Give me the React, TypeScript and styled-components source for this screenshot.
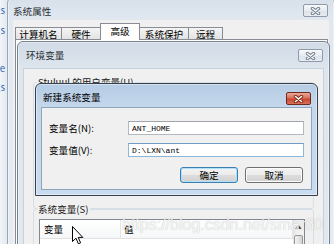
import React from "react";
import styled, { createGlobalStyle } from "styled-components";

const UI = `"Noto Sans CJK SC", "Noto Sans", sans-serif`;
const MONO = `"Liberation Mono", "DejaVu Sans Mono", monospace`;

const GlobalStyle = createGlobalStyle`
  html, body { margin: 0; padding: 0; }
  body { background: #e4ebf2; font-family: ${UI}; font-size: 9.6px; color: #000; }
  #root { width: 334px; height: 244px; }
`;

const Desktop = styled.div`
  position: relative;
  width: 334px;
  height: 244px;
  overflow: hidden;
  background: linear-gradient(90deg, #f1f5f9 0, #e2e9f0 7px);
`;

const BackLinks = styled.div`
  position: absolute;
  left: -31px;
  top: 0;
  width: 36px;
  display: flex;
  flex-direction: column;
  align-items: flex-end;
  color: #2c63b5;
`;

const BackLink = styled.span<{ $mt: number }>`
  margin-top: ${(p) => p.$mt}px;
  line-height: 12px;
  white-space: nowrap;
`;

const Win = styled.div<{
  $x: number;
  $y: number;
  $w: number;
  $h: number;
  $frame: string;
  $edge: string;
  $z: number;
}>`
  position: absolute;
  left: ${(p) => p.$x}px;
  top: ${(p) => p.$y}px;
  width: ${(p) => p.$w}px;
  height: ${(p) => p.$h}px;
  z-index: ${(p) => p.$z};
  box-sizing: border-box;
  display: flex;
  flex-direction: column;
  padding: 0 5px 5px;
  border: 1px solid ${(p) => p.$edge};
  border-radius: 6px 6px 0 0;
  background: ${(p) => p.$frame};
  box-shadow: inset 0 0 0 1px rgba(255, 255, 255, 0.45);
`;

const TitleBar = styled.div<{ $h: number; $pl: number }>`
  flex: none;
  height: ${(p) => p.$h}px;
  box-sizing: border-box;
  padding: 7px 0 0 ${(p) => p.$pl}px;
  display: flex;
  align-items: flex-start;
  justify-content: space-between;
`;

const Title = styled.span<{ $active?: boolean }>`
  line-height: 12px;
  color: ${(p) => (p.$active ? "#000" : "#2b3035")};
  white-space: nowrap;
`;

const CloseBtn = styled.div<{ $active?: boolean; $dy: number }>`
  flex: none;
  width: 25px;
  height: 13px;
  box-sizing: border-box;
  margin: ${(p) => p.$dy}px 1px 0 0;
  border: 1px solid ${(p) => (p.$active ? "#6e2a1f" : "#8f9baa")};
  border-radius: 2px;
  background: ${(p) =>
    p.$active
      ? "linear-gradient(#eaa898 0, #d9725d 45%, #c9462f 55%, #d8735a 100%)"
      : "linear-gradient(#f7f9fb 0, #e7ecf1 50%, #dbe2e9 51%, #e6ebf0 100%)"};
  display: flex;
  align-items: center;
  justify-content: center;
`;

const Client = styled.div<{ $edge: string }>`
  flex: 1;
  min-height: 0;
  display: flex;
  flex-direction: column;
  background: #f0f0f0;
  border: 1px solid ${(p) => p.$edge};
  overflow: hidden;
`;

/* ---------- tabs ---------- */
const TabStrip = styled.div`
  flex: none;
  height: 18px;
  padding-left: 1px;
  display: flex;
  align-items: flex-end;
  position: relative;
  z-index: 1;
`;

const Tab = styled.div<{ $w: number; $active?: boolean; $first?: boolean }>`
  box-sizing: border-box;
  width: ${(p) => p.$w}px;
  height: ${(p) => (p.$active ? 17 : 12)}px;
  margin-bottom: ${(p) => (p.$active ? -1 : 0)}px;
  margin-left: ${(p) => (p.$first ? 0 : -1)}px;
  border: 1px solid #898c95;
  border-bottom: none;
  background: ${(p) => (p.$active ? "#fff" : "linear-gradient(#f4f4f4, #e3e3e3)")};
  display: flex;
  align-items: center;
  justify-content: center;
  padding-bottom: ${(p) => (p.$active ? 2 : 0)}px;
  line-height: 12px;
  white-space: nowrap;
  position: relative;
  z-index: ${(p) => (p.$active ? 2 : 1)};
`;

const TabPanel = styled.div`
  flex: 1;
  margin-left: 1px;
  background: #fff;
  border: 1px solid #898c95;
`;

/* ---------- env window content ---------- */
const EnvBody = styled.div`
  flex: 1;
  display: flex;
  flex-direction: column;
  padding: 13px 9px 0;
`;

const GroupBox = styled.div<{ $h: number }>`
  flex: none;
  height: ${(p) => p.$h}px;
  box-sizing: border-box;
  border: 1px solid #d5dfe5;
  border-radius: 3px;
  display: flex;
  flex-direction: column;
`;

const GroupLabel = styled.span`
  align-self: flex-start;
  margin: -7px 0 0 3px;
  padding: 0 1px;
  line-height: 12px;
  background: #f0f0f0;
  color: #1a1a1a;
  white-space: nowrap;
`;

const ListView = styled.div`
  flex: 1;
  margin: 4px 0 0 5px;
  width: 266px;
  box-sizing: border-box;
  border: 1px solid #828790;
  background: #fff;
  display: flex;
`;

const ListBody = styled.div`
  flex: 1;
  display: flex;
  flex-direction: column;
`;

const ListHeader = styled.div`
  flex: none;
  height: 18px;
  display: flex;
  border-bottom: 1px solid #e2e2e2;
  background: linear-gradient(#ffffff, #f6f7f8);
`;

const HeadCell = styled.div<{ $w?: number; $pl: number }>`
  ${(p) => (p.$w ? `width: ${p.$w}px; flex: none;` : "flex: 1;")}
  box-sizing: border-box;
  padding-left: ${(p) => p.$pl}px;
  display: flex;
  align-items: center;
  border-right: 1px solid #e5e5e5;
  line-height: 12px;
`;

const DataRow = styled.div`
  display: flex;
  height: 16px;
  align-items: center;
  font-family: ${MONO};
  font-size: 8px;
`;

const DataCell = styled.div<{ $w?: number; $pl: number }>`
  ${(p) => (p.$w ? `width: ${p.$w}px; flex: none;` : "flex: 1;")}
  padding-left: ${(p) => p.$pl}px;
  white-space: nowrap;
  overflow: hidden;
`;

const ScrollBar = styled.div`
  flex: none;
  width: 11px;
  display: flex;
  flex-direction: column;
  background: linear-gradient(90deg, #e3e3e3, #f1f1f1 35%, #f1f1f1);
`;

const ScrollArrow = styled.div`
  flex: none;
  height: 14px;
  display: flex;
  align-items: center;
  justify-content: center;
`;

const ScrollThumb = styled.div`
  flex: none;
  height: 30px;
  margin: 1px 1px 0;
  box-sizing: border-box;
  border: 1px solid #979797;
  border-radius: 2px;
  background: linear-gradient(90deg, #f4f4f4, #e2e2e2 50%, #d3d3d3);
`;

/* ---------- new-variable dialog ---------- */
const Form = styled.div`
  flex: 1;
  display: flex;
  flex-direction: column;
  gap: 8px;
  padding: 13px 7px 0;
`;

const FieldRow = styled.div`
  display: grid;
  grid-template-columns: 79px 1fr;
  align-items: center;
  height: 14px;
`;

const FieldLabel = styled.label`
  line-height: 12px;
  white-space: nowrap;
`;

const TextBox = styled.input<{ $focus?: boolean }>`
  box-sizing: border-box;
  width: 100%;
  height: 14px;
  margin: 0;
  padding: 0 0 0 3px;
  border: 1px solid ${(p) => (p.$focus ? "#8fb6d6" : "#b4b9c0")};
  border-top-color: ${(p) => (p.$focus ? "#6f9cc2" : "#a0a5ad")};
  background: #fff;
  font-family: ${MONO};
  font-size: 8px;
  color: #000;
  outline: none;
`;

const ButtonRow = styled.div`
  display: flex;
  justify-content: flex-end;
  gap: 7px;
  margin-top: 2px;
  padding-right: 1px;
`;

const Button = styled.button<{ $default?: boolean }>`
  width: 58px;
  height: 16px;
  box-sizing: border-box;
  padding: 0;
  border: 1px solid ${(p) => (p.$default ? "#3c7fb1" : "#707070")};
  border-radius: 3px;
  background: linear-gradient(#f4f4f4 0, #ebebeb 50%, #dddddd 51%, #d1d1d1 100%);
  box-shadow: ${(p) => (p.$default ? "inset 0 0 0 1px #aee0fb" : "inset 0 0 0 1px #fcfcfc")};
  font-family: ${UI};
  font-size: 9.6px;
  line-height: 12px;
  color: #000;
`;

/* ---------- overlays ---------- */
const Watermark = styled.div`
  position: absolute;
  left: 122px;
  top: 216px;
  z-index: 10;
  font-family: "Liberation Sans", Arial, sans-serif;
  font-size: 16px;
  line-height: 18px;
  color: rgba(255, 255, 255, 0.85);
  text-shadow: 0 0 1px rgba(110, 110, 110, 0.5);
  white-space: nowrap;
  pointer-events: none;
`;

const Cursor = styled.svg`
  position: absolute;
  left: 72px;
  top: 226px;
  z-index: 11;
`;

const CloseGlyph: React.FC<{ active?: boolean }> = ({ active }) => (
  <svg width="11" height="8" viewBox="0 0 11 8">
    <path
      d="M2.5 1.5 L8.5 6.5 M8.5 1.5 L2.5 6.5"
      stroke={active ? "#7a2618" : "#6c7a89"}
      strokeWidth="3.4"
      strokeLinecap="round"
      fill="none"
    />
    <path
      d="M2.5 1.5 L8.5 6.5 M8.5 1.5 L2.5 6.5"
      stroke={active ? "#ffffff" : "#f4f6f8"}
      strokeWidth="1.6"
      strokeLinecap="round"
      fill="none"
    />
  </svg>
);

const tabs = [
  { label: "计算机名", w: 47 },
  { label: "硬件", w: 40 },
  { label: "高级", w: 40, active: true },
  { label: "系统保护", w: 50 },
  { label: "远程", w: 35 },
];

const backLinks = [
  { text: "设置s", mt: 4 },
  { text: "设置s", mt: 8 },
  { text: "设置e", mt: 26 },
  { text: "设置s", mt: 7 },
];

export default function App() {
  return (
    <>
      <GlobalStyle />
      <Desktop>
        <BackLinks>
          {backLinks.map((b, i) => (
            <BackLink key={i} $mt={b.mt}>
              {b.text}
            </BackLink>
          ))}
        </BackLinks>

        {/* 系统属性 */}
        <Win
          $x={7}
          $y={-3}
          $w={328}
          $h={262}
          $z={1}
          $edge="#9ca7b3"
          $frame="linear-gradient(180deg, #d7e0ea 0, #e1e8f0 22px, #e5ebf1 100%)"
        >
          <TitleBar $h={22} $pl={0}>
            <Title>系统属性</Title>
            <CloseBtn $dy={-1}>
              <CloseGlyph />
            </CloseBtn>
          </TitleBar>
          <Client $edge="transparent">
            <TabStrip>
              {tabs.map((t, i) => (
                <Tab key={t.label} $w={t.w} $active={t.active} $first={i === 0}>
                  {t.label}
                </Tab>
              ))}
            </TabStrip>
            <TabPanel />
          </Client>
        </Win>

        {/* 环境变量 */}
        <Win
          $x={17}
          $y={41}
          $w={313}
          $h={215}
          $z={2}
          $edge="#76818e"
          $frame="linear-gradient(180deg, #d1dbe6 0, #dde5ee 26px, #e2e8ef 100%)"
        >
          <TitleBar $h={26} $pl={3}>
            <Title>环境变量</Title>
            <CloseBtn $dy={0}>
              <CloseGlyph />
            </CloseBtn>
          </TitleBar>
          <Client $edge="#c9d2dc">
            <EnvBody>
              <GroupBox $h={127}>
                <GroupLabel>Stuluul 的用户变量(U)</GroupLabel>
              </GroupBox>
              <GroupBox $h={64}>
                <GroupLabel>系统变量(S)</GroupLabel>
                <ListView>
                  <ListBody>
                    <ListHeader>
                      <HeadCell $w={81} $pl={4}>
                        变量
                      </HeadCell>
                      <HeadCell $pl={3}>值</HeadCell>
                    </ListHeader>
                    <DataRow>
                      <DataCell $w={81} $pl={4}>
                        ANT_HOME
                      </DataCell>
                      <DataCell $pl={3}>D:\LXN\ant;C:\Program Files</DataCell>
                    </DataRow>
                  </ListBody>
                  <ScrollBar>
                    <ScrollArrow>
                      <svg width="7" height="4" viewBox="0 0 7 4">
                        <path d="M0 4 L3.5 0 L7 4 Z" fill="#3d3d3d" />
                      </svg>
                    </ScrollArrow>
                    <ScrollThumb />
                  </ScrollBar>
                </ListView>
              </GroupBox>
            </EnvBody>
          </Client>
        </Win>

        {/* 新建系统变量 */}
        <Win
          $x={35}
          $y={83}
          $w={283}
          $h={113}
          $z={3}
          $edge="#34404d"
          $frame="linear-gradient(180deg, #b5cce5 0, #c4d7eb 23px, #c9dbee 100%)"
        >
          <TitleBar $h={23} $pl={2}>
            <Title $active>新建系统变量</Title>
            <CloseBtn $active $dy={1}>
              <CloseGlyph active />
            </CloseBtn>
          </TitleBar>
          <Client $edge="#8ea5bc">
            <Form>
              <FieldRow>
                <FieldLabel>变量名(N):</FieldLabel>
                <TextBox readOnly value="ANT_HOME" />
              </FieldRow>
              <FieldRow>
                <FieldLabel>变量值(V):</FieldLabel>
                <TextBox readOnly $focus value="D:\LXN\ant" />
              </FieldRow>
              <ButtonRow>
                <Button $default>确定</Button>
                <Button>取消</Button>
              </ButtonRow>
            </Form>
          </Client>
        </Win>

        <Watermark>https://blog.csdn.net/smar60</Watermark>

        <Cursor width="12" height="19" viewBox="0 0 12 19">
          <path
            d="M0.5 0.5 L0.5 15.5 L4 12.2 L6.4 17.8 L8.6 16.8 L6.2 11.4 L10.8 11.4 Z"
            fill="#ffffff"
            stroke="#000000"
            strokeWidth="1"
            strokeLinejoin="miter"
          />
        </Cursor>
      </Desktop>
    </>
  );
}
